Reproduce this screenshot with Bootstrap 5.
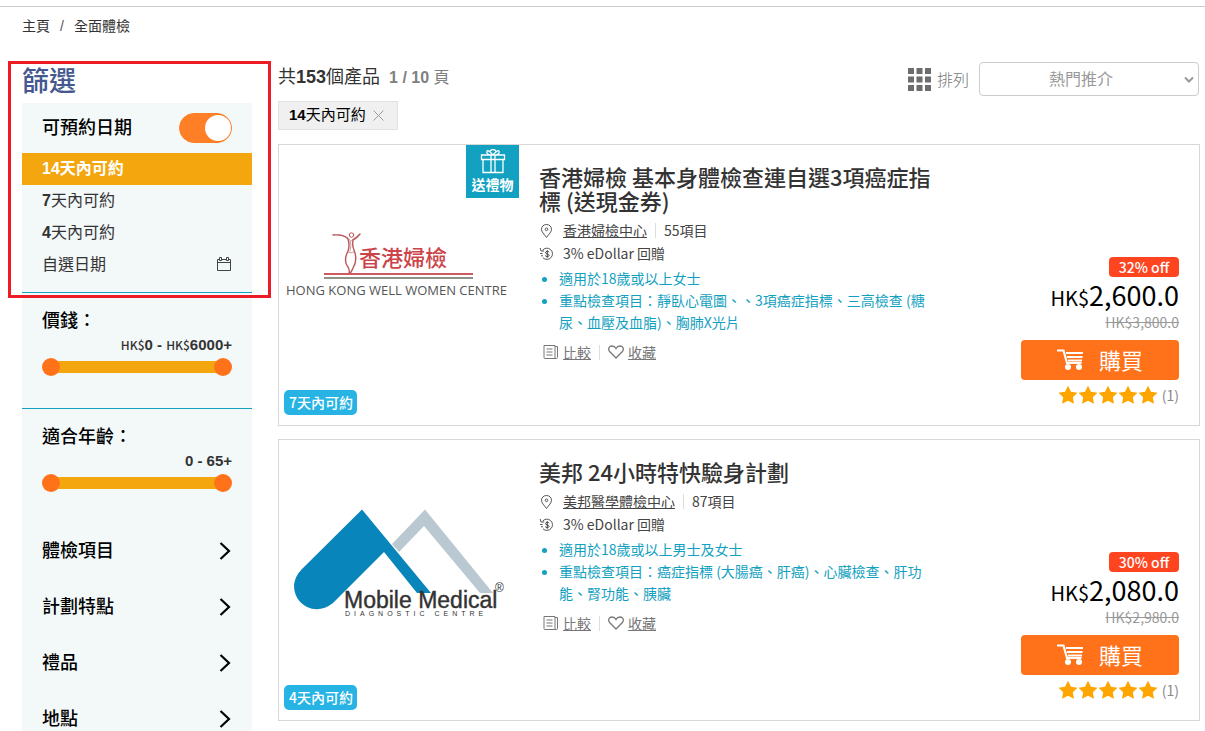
<!DOCTYPE html>
<html lang="zh-Hant">
<head>
<meta charset="utf-8">
<meta name="viewport" content="width=device-width, initial-scale=1">
<title>全面體檢</title>
<link rel="stylesheet" href="https://cdn.jsdelivr.net/npm/bootstrap@5.3.0/dist/css/bootstrap.min.css">
<style>
body{font-family:"Liberation Sans","Noto Sans CJK TC",sans-serif;color:#333;background:#fff;font-size:14px;overflow-x:hidden}
.topline{height:7px;border-bottom:1px solid #ccc}
.page{padding:0 5px 0 22px}
.crumbs{font-size:14px;line-height:20px;padding-top:9px;margin-bottom:26px;--bs-breadcrumb-item-padding-x:10px;--bs-breadcrumb-item-active-color:#333}
.crumbs a{color:#333}
.crumbs .breadcrumb-item+.breadcrumb-item::before{color:#555}
.layout{gap:26px}
.filters{width:230px;flex:none}
.framed::after{content:"";position:absolute;inset:-1px -19px -5px -14px;border:3px solid #ed1c24;pointer-events:none}
.filters h1{font-size:27px;line-height:41px;margin:0;color:#45588f;font-weight:500}
.panel{background:#f3f8f9}
.label-lg{font-size:18px;line-height:24px;color:#000;font-weight:500}
.date-head{height:50px;padding:0 20px}
.toggle.form-check-input{width:53px;height:30px;margin:0;background-color:#ff7f27;border-color:#ff7f27;--bs-form-switch-bg:none;position:relative;box-shadow:none}
.toggle.form-check-input:checked{background-image:none;background-color:#ff7f27}
.toggle::after{content:"";position:absolute;width:26px;height:26px;border-radius:50%;background:#fff;right:0;top:1px}
.opt{border:0;background:none;height:32px;padding:0 20px;font-size:16px;line-height:32px;color:#333;text-align:left;width:100%;white-space:nowrap}
.opt.on{background:#f4a60e;color:#fff;font-weight:700}
.date-group{padding-bottom:11px;border-bottom:1px solid #12a1c0}
.slide-group{padding:16px 20px 32px;border-bottom:1px solid #12a1c0}
.slide-group.last{border:0;padding-bottom:31px}
.value{font-size:15px;line-height:23px;margin-bottom:2px;font-weight:700;text-align:right}
.value small{font-family:"Noto Sans CJK TC",sans-serif;font-size:12px;font-weight:500}
.dual{height:18px;position:relative}
.dual::before{content:"";position:absolute;inset:3px 9px;background:#f4a60e}
.dual input{position:absolute;inset:0;width:100%;height:18px;margin:0;background:none;appearance:none;pointer-events:none}
.dual input::-webkit-slider-thumb{appearance:none;width:18px;height:18px;border-radius:50%;background:#ff721a;pointer-events:auto}
.fold{height:56px;padding:0 20px;border:0;background:none;width:100%}
.count{font-size:18px;line-height:32px;padding-bottom:3px}
.pages{font-size:16px;color:#808080}
.sort{height:34px;margin-bottom:5px;margin-right:1px}
.sort label{font-family:"Noto Sans CJK TC",sans-serif;font-size:16px;color:#777;margin:0 10px 0 6px;font-weight:300}
.sort .form-select{width:220px;height:34px;border:1px solid #ccc;border-radius:4px;color:#999;font-family:"Noto Sans CJK TC",sans-serif;font-size:16px;font-weight:400;text-align:center;padding:0 20px 2px 4px;line-height:28px;background-image:none}
.chev{position:absolute;right:5px;top:14px;pointer-events:none}
.chip{background:#f0f0f0;border:1px solid #e1e1e1;height:29px;padding:0 13px 0 10px;font-size:15px;color:#000;margin-bottom:14px}
.chip svg{margin-left:7px}
.product{border:1px solid #d7d7d7;border-radius:0;height:282px;margin-bottom:13px;font-family:"Noto Sans CJK TC",sans-serif;flex-direction:row}
.pic{width:240px;flex:none;position:relative}
.gift{position:absolute;right:0;top:0;width:53px;height:53px;background:#12a1c0;color:#fff;font-size:14px;font-weight:700;line-height:20px;text-align:center;padding-top:4px}
.gift svg{display:block;margin:0 auto}
.avail{position:absolute;left:5px;bottom:10px;background:#27b4e4;color:#fff;border-radius:5px;font-size:14px;line-height:25px;padding:0 4px 0 5px;font-weight:500}
.info{padding:19px 0 0 20px;flex:1;min-width:0}
.info h2{font-size:22px;line-height:24px;margin:0 0 7px;font-weight:500;color:#333}
.meta{line-height:23px;color:#444;height:23px}
.meta svg,.acts svg{flex:none}
.meta a{color:#444}
.rule{border-left:1px solid #ddd;height:15px}
.facts{color:#12a1c0;line-height:22px;margin:2px 0 8px;padding-left:20px}
.acts{line-height:22px}
.acts a{color:#777}
.buy{width:158px;flex:none;margin:0 20px 20px 83px;text-align:right}
.off{background:#ff4420;color:#fff;border-radius:4px;font-size:14px;line-height:20px;width:70px;font-weight:500;text-align:center;margin-bottom:2px}
.price{font-size:27px;line-height:32px;color:#000;white-space:nowrap}
.price small{font-size:20px}
.was{color:#999;line-height:16px;margin-bottom:10px}
.btn-buy{background:#ff721a;color:#fff;height:40px;border-radius:4px;font-size:22px;line-height:24px;padding:0 0 2px;width:100%;gap:16px}
.btn-buy:hover{background:#ef6410;color:#fff}
.rate{height:20px;margin-top:5px;color:#888}
.tracked{letter-spacing:4px}
</style>
</head>
<body>
<svg width="0" height="0" class="position-absolute" aria-hidden="true">
<symbol id="pin" viewBox="0 0 16 16"><path d="M7.500 1.500C4.500 1.500 2.500 3.600 2.500 6.300 2.500 9 5 11 7.500 14.500 10 11 12.500 9 12.500 6.300 12.500 3.600 10.500 1.500 7.500 1.500Z" fill="none" stroke="#555"/><circle cx="7.500" cy="6.300" r="1.300" fill="none" stroke="#555"/></symbol>
<symbol id="coin" viewBox="0 0 16 16"><path d="M3.500 4.300A5.600 5.600 0 1 1 4 11.800M1.200 2l.8 3h3.200M1 7.500h2.500M2 9.800h2" fill="none" stroke="#555"/><path d="M10.200 6.200C9.700 5 6.500 5 6.500 6.700S10.200 7.700 10.200 9.300 6.800 11 6.200 9.600M8.300 4.200v7.600" fill="none" stroke="#444"/></symbol>
<symbol id="compare" viewBox="0 0 16 16"><path d="M1 1.500h11v13H2q-1 0-1-1zM12 2.500h2.500v11q0 1-1 1H11M3.500 5h6M3.500 8h6M3.500 11h6" fill="none" stroke="#777"/></symbol>
<symbol id="heart" viewBox="0 0 16 16"><path d="M8 14 1.800 7.800C-.5 5 1.200 2 4 2 6 2 7.200 3 8 4.500 8.800 3 10 2 12 2 14.800 2 16.500 5 14.200 7.800Z" fill="none" stroke="#777" stroke-width="1.300"/></symbol>
<symbol id="cart" viewBox="0 0 26 21"><path d="M0 1.500h6.500L10 14h14.500" fill="none" stroke="#fff" stroke-width="2.200"/><path d="M9 4h17M10 8h15.500M11 11.500h14" stroke="#fff" stroke-width="2"/><circle cx="11" cy="18" r="3" fill="#fff"/><circle cx="22" cy="18" r="3" fill="#fff"/></symbol>
<symbol id="stars" viewBox="0 0 100 20"><defs><path id="st" d="M10 .8 13 6.800 19.500 7.700 14.800 12.300 16 18.800 10 15.700 4 18.800 5.200 12.300.5 7.700 7 6.800Z"/></defs><g fill="#ffa500"><use href="#st"/><use href="#st" x="20"/><use href="#st" x="40"/><use href="#st" x="60"/><use href="#st" x="80"/></g></symbol>
<symbol id="arrow" viewBox="0 0 12 18"><path d="M1.500 1 10 9 1.500 17" fill="none" stroke="#000" stroke-width="2.200"/></symbol>
</svg>
<div class="topline"></div>
<div class="page">
<nav aria-label="breadcrumb"><ol class="breadcrumb crumbs"><li class="breadcrumb-item"><a class="text-decoration-none" href="#">主頁</a></li><li class="breadcrumb-item active">全面體檢</li></ol></nav>
<div class="d-flex layout align-items-start">
<aside class="filters">
<div class="framed position-relative">
<h1>篩選</h1>
<section class="panel date-group">
<div class="date-head d-flex align-items-center justify-content-between form-switch"><label class="label-lg" for="dates">可預約日期</label><input class="form-check-input toggle" type="checkbox" role="switch" id="dates" checked></div>
<button class="opt on d-block" type="button">14天內可約</button>
<button class="opt d-block" type="button"><b>7</b>天內可約</button>
<button class="opt d-block" type="button"><b>4</b>天內可約</button>
<button class="opt d-flex align-items-center justify-content-between" type="button">自選日期<svg width="16" height="18" viewBox="0 0 16 18" fill="none" stroke="#444"><path d="M3.500 3.500h-2v11h13v-11h-2M5.500 3.500h5M1.500 6.500h13M3.500 1.500h2v3h-2zM10.500 1.500h2v3h-2z"/></svg></button>
</section>
</div>
<section class="panel slide-group">
<div class="label-lg">價錢：</div>
<div class="value"><small>HK$</small>0 - <small>HK$</small>6000+</div>
<div class="dual"><input type="range" min="0" max="6000" value="0" aria-label="最低價錢"><input type="range" min="0" max="6000" value="6000" aria-label="最高價錢"></div>
</section>
<section class="panel slide-group last">
<div class="label-lg">適合年齡：</div>
<div class="value">0 - 65+</div>
<div class="dual"><input type="range" min="0" max="65" value="0" aria-label="最低年齡"><input type="range" min="0" max="65" value="65" aria-label="最高年齡"></div>
</section>
<section class="panel">
<button class="fold label-lg d-flex align-items-center justify-content-between" type="button">體檢項目<svg width="14" height="18"><use href="#arrow"/></svg></button>
<button class="fold label-lg d-flex align-items-center justify-content-between" type="button">計劃特點<svg width="14" height="18"><use href="#arrow"/></svg></button>
<button class="fold label-lg d-flex align-items-center justify-content-between" type="button">禮品<svg width="14" height="18"><use href="#arrow"/></svg></button>
<button class="fold label-lg d-flex align-items-center justify-content-between" type="button">地點<svg width="14" height="18"><use href="#arrow"/></svg></button>
</section>
</aside>
<main class="flex-grow-1">
<div class="sort d-flex align-items-center">
<div class="me-auto count">共<b>153</b>個產品 <span class="pages ms-1"><b>1 / 10</b> 頁</span></div>
<svg width="23" height="23" viewBox="0 0 23 23" fill="#6d6d6d"><path d="M0 0h6v6H0zM8.500 0h6v6h-6zM17 0h6v6h-6zM0 8.500h6v6H0zM8.500 8.500h6v6h-6zM17 8.500h6v6h-6zM0 17h6v6H0zM8.500 17h6v6h-6zM17 17h6v6h-6z"/></svg>
<label for="order">排列</label>
<div class="position-relative"><select class="form-select" id="order"><option>熱門推介</option></select><svg class="chev" width="10" height="8" viewBox="0 0 10 8"><path d="M1 1.500 5 5.500 9 1.500" fill="none" stroke="#999" stroke-width="2"/></svg></div>
</div>
<button class="chip d-flex align-items-center" type="button"><span><b>14</b>天內可約</span><svg width="11" height="11" viewBox="0 0 11 11"><path d="M.5.500l10 10M10.500.500l-10 10" stroke="#999"/></svg></button>

<article class="card product">
<div class="pic">
<svg width="240" height="280" viewBox="0 0 240 280">
<g fill="none" stroke="#b9565a" stroke-linecap="round"><circle cx="72.500" cy="90" r="2.200"/><path stroke-width="1.400" d="M54 90q12-1 15 4 2 6 0 12-5 10 0 16 2 4 1 6M81 89q-3 4-7 6-1 6 1 10 4 10-1 18-2 5-4 6"/><path d="M59 90q8 1 12 5 2 5 0 11M80 90q-5 3-8 6M69 107q3 2 6 0" opacity=".6"/></g>
<text x="80" y="121" font-size="22" font-weight="500" fill="#cc4449">香港婦檢</text>
<path d="M45 129h149" stroke="#cc5a5e" stroke-width="2"/><path d="M45 133h149" stroke="#8b9288" stroke-width="2"/>
<text x="7" y="150" font-size="13" fill="#555" style="font-family:'Open Sans',sans-serif">HONG KONG WELL WOMEN CENTRE</text>
</svg>
<div class="gift"><svg width="26" height="25" viewBox="0 0 26 25" fill="none" stroke="#fff" stroke-width="1.300"><path d="M1.500 6h23v4.500h-23zM3 10.500h20v13H3zM11 6v17.500M15 6v17.500M13 6C9 1 7 .8 6.800 3 6.700 5 9 6 13 6 17 6 19.300 5 19.200 3 19 .8 17 1 13 6M10 2q3-3 6 0"/></svg>送禮物</div>
<span class="avail">7天內可約</span>
</div>
<div class="info">
<h2>香港婦檢 基本身體檢查連自選3項癌症指標 (送現金券)</h2>
<div class="meta d-flex align-items-center"><svg class="me-2" width="16" height="16"><use href="#pin"/></svg><a href="#">香港婦檢中心</a><span class="rule mx-2"></span>55項目</div>
<div class="meta d-flex align-items-center"><svg class="me-2" width="16" height="16"><use href="#coin"/></svg>3% eDollar 回贈</div>
<ul class="facts"><li>適用於18歲或以上女士</li><li>重點檢查項目：靜臥心電圖、、3項癌症指標、三高檢查 (糖尿、血壓及血脂)、胸肺X光片</li></ul>
<div class="acts d-flex align-items-center"><svg class="ms-1 me-1" width="16" height="16"><use href="#compare"/></svg><a href="#">比較</a><span class="rule ms-2 me-1"></span><svg class="ms-1 me-1" width="16" height="16"><use href="#heart"/></svg><a href="#">收藏</a></div>
</div>
<div class="buy d-flex flex-column justify-content-end">
<span class="off align-self-end">32% off</span>
<div class="price"><small>HK$</small>2,600.0</div>
<del class="was">HK$3,800.0</del>
<button class="btn btn-buy d-flex align-items-center justify-content-center" type="button"><svg width="26" height="21"><use href="#cart"/></svg>購買</button>
<div class="rate d-flex justify-content-end align-items-center"><svg class="me-1" width="100" height="20" aria-label="5"><use href="#stars"/></svg>(1)</div>
</div>
</article>

<article class="card product">
<div class="pic">
<svg width="240" height="280" viewBox="0 0 240 280">
<path d="M83 69.500 152 153h-14l-33-41-51 51q-13 10-26 4-13-7-13-22 1-9 8-16Z" fill="#0886bb"/>
<path d="m146 69.500 68 83.500h-13l-56-67-25 26-7-8Z" fill="#bac9d1"/>
<g fill="#333" style="font-family:'Liberation Sans',sans-serif"><text x="65" y="168" font-size="23" stroke="#333" stroke-width=".4">Mobile Medical</text><text class="tracked" x="66" y="176" font-size="7">DIAGNOSTIC CENTRE</text><text x="216" y="152" font-size="12">®</text></g>
</svg>
<span class="avail">4天內可約</span>
</div>
<div class="info">
<h2>美邦 24小時特快驗身計劃</h2>
<div class="meta d-flex align-items-center"><svg class="me-2" width="16" height="16"><use href="#pin"/></svg><a href="#">美邦醫學體檢中心</a><span class="rule mx-2"></span>87項目</div>
<div class="meta d-flex align-items-center"><svg class="me-2" width="16" height="16"><use href="#coin"/></svg>3% eDollar 回贈</div>
<ul class="facts"><li>適用於18歲或以上男士及女士</li><li>重點檢查項目：癌症指標 (大腸癌、肝癌)、心臟檢查、肝功能、腎功能、胰臟</li></ul>
<div class="acts d-flex align-items-center"><svg class="ms-1 me-1" width="16" height="16"><use href="#compare"/></svg><a href="#">比較</a><span class="rule ms-2 me-1"></span><svg class="ms-1 me-1" width="16" height="16"><use href="#heart"/></svg><a href="#">收藏</a></div>
</div>
<div class="buy d-flex flex-column justify-content-end">
<span class="off align-self-end">30% off</span>
<div class="price"><small>HK$</small>2,080.0</div>
<del class="was">HK$2,980.0</del>
<button class="btn btn-buy d-flex align-items-center justify-content-center" type="button"><svg width="26" height="21"><use href="#cart"/></svg>購買</button>
<div class="rate d-flex justify-content-end align-items-center"><svg class="me-1" width="100" height="20" aria-label="5"><use href="#stars"/></svg>(1)</div>
</div>
</article>
</main>
</div>
</div>
<script src="https://cdn.jsdelivr.net/npm/bootstrap@5.3.0/dist/js/bootstrap.bundle.min.js"></script>
</body>
</html>
